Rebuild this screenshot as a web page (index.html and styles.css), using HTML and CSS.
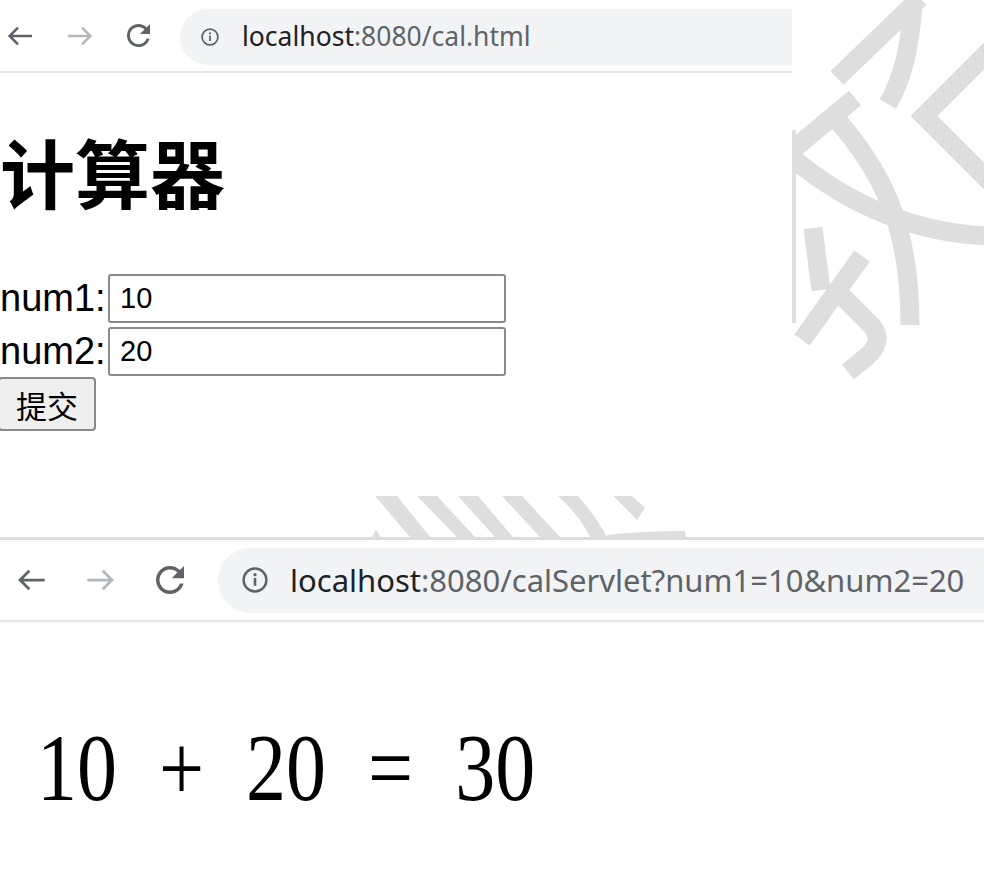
FILE: index.html
```html
<!DOCTYPE html>
<html lang="zh">
<head>
<meta charset="utf-8">
<title>cal</title>
<link rel="stylesheet" href="styles.css">
</head>
<body>
<div class="win win1">
  <div class="bar bar1">
    <svg class="ic back" viewBox="0 0 26 20"><path d="M25 10H2.8M11 1.6L2.6 10L11 18.4"/></svg>
    <svg class="ic fwd" viewBox="0 0 26 20"><path d="M1 10H23.2M15 1.6L23.4 10L15 18.4"/></svg>
    <svg class="ic reload" viewBox="4 4 16 16"><path d="M17.65 6.35C16.2 4.9 14.21 4 12 4c-4.42 0-7.99 3.58-7.99 8s3.57 8 7.99 8c3.73 0 6.84-2.55 7.73-6h-2.08c-.82 2.33-3.04 4-5.65 4-3.31 0-6-2.69-6-6s2.69-6 6-6c1.66 0 3.14.69 4.22 1.78L13 11h7V4l-2.35 2.35z"/></svg>
    <div class="omni">
      <svg class="info" viewBox="0 0 18 18"><circle cx="9" cy="9" r="7.9"/><rect x="8.1" y="7.6" width="1.8" height="5.4"/><circle class="dot" cx="9" cy="5.3" r="1.1"/></svg>
      <span class="url"><span class="host">localhost</span>:8080/cal.html</span>
    </div>
  </div>
  <div class="page1">
    <h1 class="title">计算器</h1>
    <form class="form">
      <div class="row"><label class="lbl">num1:</label><input class="field" type="text" value="10"></div>
      <div class="row"><label class="lbl">num2:</label><input class="field" type="text" value="20"></div>
      <button class="submit" type="button">提交</button>
    </form>
  </div>
</div>
<div class="win win2">
  <div class="bar bar2">
    <svg class="ic back" viewBox="0 0 26 20"><path d="M25 10H2.8M11 1.6L2.6 10L11 18.4"/></svg>
    <svg class="ic fwd" viewBox="0 0 26 20"><path d="M1 10H23.2M15 1.6L23.4 10L15 18.4"/></svg>
    <svg class="ic reload" viewBox="4 4 16 16"><path d="M17.65 6.35C16.2 4.9 14.21 4 12 4c-4.42 0-7.99 3.58-7.99 8s3.57 8 7.99 8c3.73 0 6.84-2.55 7.73-6h-2.08c-.82 2.33-3.04 4-5.65 4-3.31 0-6-2.69-6-6s2.69-6 6-6c1.66 0 3.14.69 4.22 1.78L13 11h7V4l-2.35 2.35z"/></svg>
    <div class="omni">
      <svg class="info" viewBox="0 0 18 18"><circle cx="9" cy="9" r="7.9"/><rect x="8.1" y="7.6" width="1.8" height="5.4"/><circle class="dot" cx="9" cy="5.3" r="1.1"/></svg>
      <span class="url"><span class="host">localhost</span>:8080/calServlet?num1=10&amp;num2=20</span>
    </div>
  </div>
  <div class="result">10 + 20 = 30</div>
</div>
<svg class="watermark" viewBox="0 0 984 876" width="984" height="876">
  <defs>
    <clipPath id="cr"><rect x="792" y="0" width="192" height="440"/></clipPath>
    <clipPath id="cb"><rect x="0" y="496" width="984" height="41"/></clipPath>
  </defs>
  <g clip-path="url(#cr)" class="wm-lines">
    <path d="M837 78L920 -2"/>
    <path d="M913 4C910 45 904 76 888 104" stroke-width="17"/>
    <path d="M1010 30L924 116L1000 192" stroke-width="21"/>
    <path d="M855 98L790 152"/>
    <path d="M790 156Q880 232 990 236"/>
    <path d="M834 116C880 170 910 220 910 325"/>
    <path d="M813 228L821 290" stroke-width="13"/>
    <path d="M862 256L802 340"/>
    <path d="M832 286L872 326Q885 342 865 358L848 372"/>
    <rect class="wm-fill" x="792" y="130" width="4" height="193"/>
  </g>
  <g clip-path="url(#cb)" class="wm-fill">
    <polygon points="375,496 397,496 430,537 410,537"/>
    <polygon points="417,496 437,496 475,537 457,537"/>
    <polygon points="458,496 478,496 513,537 495,537"/>
    <polygon points="502,496 522,496 560,537 540,537"/>
    <path d="M558 496H578Q596 516 607 537H590Q580 516 558 496Z"/>
    <polygon points="613,496 632,496 645,508 637,520"/>
    <polygon points="372,537 376,530 381,537"/>
    <path d="M607 537V535Q640 531 685 531L686 537Z"/>
  </g>
</svg>
</body>
</html>
```

FILE: styles.css
```css
* { box-sizing: border-box; }
html, body {
  margin: 0;
  padding: 0;
  background: #ffffff;
}
body {
  width: 984px;
  height: 876px;
  overflow: hidden;
  position: relative;
  font-family: "Liberation Sans", Arial, sans-serif;
  color: #000;
}

.win1 { height: 537px; overflow: hidden; }
.win2 { border-top: 3px solid #dcdcdc; }

.bar {
  display: flex;
  align-items: center;
  background: #fff;
  border-bottom: 2px solid #e3e5e8;
}
.bar1 { width: 792px; height: 73px; }
.bar2 { width: 984px; height: 82px; }

.ic { display: block; flex: none; }
.ic path { fill: none; stroke-linecap: butt; stroke-linejoin: miter; }
.back path { stroke: #5f6368; stroke-width: 2.5; }
.fwd path { stroke: #b3b6ba; stroke-width: 2.5; }
.reload path { fill: #5f6368; stroke: none; }

.bar1 .back { width: 26px; height: 20px; margin-left: 7px; }
.bar1 .fwd { width: 26px; height: 20px; margin-left: 34px; }
.bar1 .reload { width: 23px; height: 23px; margin-left: 34px; }
.bar1 .omni { margin-left: 30px; height: 56px; border-radius: 28px 0 0 28px; padding-left: 21px; margin-top: 2px; }
.bar1 .info { width: 18px; height: 18px; }
.bar1 .url { margin-left: 23px; font-size: 26.5px; }

.bar2 .back { width: 29px; height: 22px; margin-left: 17px; }
.bar2 .fwd { width: 29px; height: 22px; margin-left: 40px; }
.bar2 .reload { width: 28px; height: 28px; margin-left: 41px; }
.bar2 .omni { margin-left: 34px; height: 65px; border-radius: 33px 0 0 33px; padding-left: 24px; }
.bar2 .info { width: 26px; height: 26px; }
.bar2 .url { margin-left: 22px; font-size: 31px; }

.omni {
  flex: 1;
  display: flex;
  align-items: center;
  background: #f1f3f4;
}
.info { display: block; flex: none; }
.info circle { fill: none; stroke: #5f6368; stroke-width: 1.7; }
.info .dot { fill: #5f6368; stroke: none; }
.info rect { fill: #5f6368; }
.url {
  font-family: "Noto Sans", "Open Sans", sans-serif;
  color: #5f6368;
  white-space: nowrap;
  line-height: 1;
}
.host { color: #202124; }

.page1 { padding-top: 60px; }
.title {
  margin: 0;
  font-family: "Noto Sans CJK SC", "Noto Sans", sans-serif;
  font-weight: 700;
  font-size: 75px;
  line-height: 75px;
}
.form {
  margin: 66px 0 0 0;
  display: flex;
  flex-direction: column;
  align-items: flex-start;
}
.row {
  display: flex;
  align-items: center;
  height: 49px;
}
.row + .row { margin-top: 4px; }
.lbl {
  font-size: 38px;
  line-height: 49px;
  width: 108px;
  white-space: nowrap;
}
.field {
  width: 398px;
  height: 49px;
  margin: 0;
  padding: 0 10px;
  border: 2px solid #8a8a8a;
  border-radius: 3px;
  font-family: "Liberation Sans", Arial, sans-serif;
  font-size: 29px;
  color: #000;
  background: #fff;
  outline: none;
}
.submit {
  margin: 1px 0 0 -2px;
  width: 98px;
  height: 54px;
  padding: 0;
  border: 2px solid #8a8a8a;
  border-radius: 4px;
  background: #efefef;
  font-family: "Noto Sans CJK SC", "Noto Sans", sans-serif;
  font-size: 31px;
  color: #000;
}

.result {
  margin-top: 111px;
  padding-left: 37px;
  font-family: "Liberation Serif", "Times New Roman", serif;
  font-size: 80px;
  line-height: 80px;
  word-spacing: 22px;
  white-space: nowrap;
  transform: scaleY(1.2);
  transform-origin: 0 67px;
}

.watermark {
  position: absolute;
  left: 0;
  top: 0;
  pointer-events: none;
}
.wm-lines path { fill: none; stroke: #dedede; stroke-width: 19; }
.wm-fill, .wm-fill polygon, .wm-fill path { fill: #dedede; stroke: none; }
```
